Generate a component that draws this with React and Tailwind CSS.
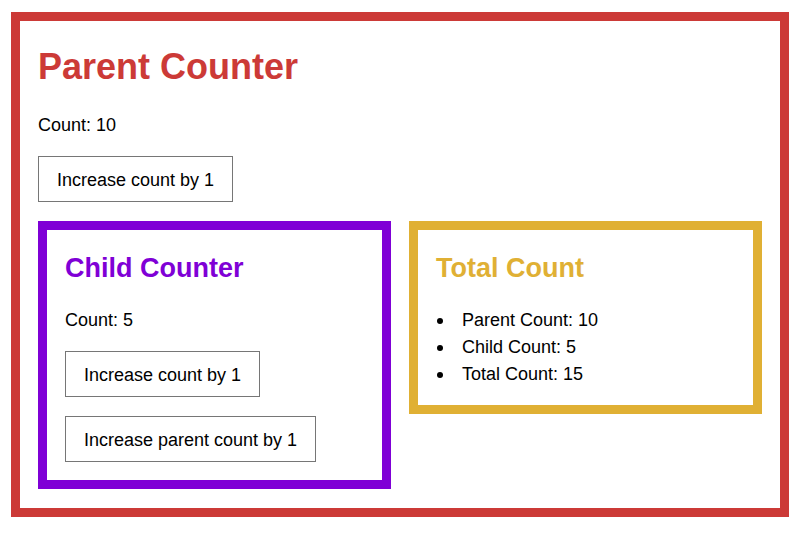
import React from "react";

function Btn({ children }) {
  return (
    <button className="block border border-[#767676] bg-white px-[18px] pt-[10px] pb-[8px] text-[18px] leading-[26px] text-black">
      {children}
    </button>
  );
}

function Bullet({ children }) {
  return (
    <li className="flex items-center h-[27px]">
      <span className="flex w-[26px] shrink-0">
        <span className="ml-[1px] block w-[6px] h-[6px] rounded-full bg-black" />
      </span>
      <span>{children}</span>
    </li>
  );
}

export default function App() {
  return (
    <div
      className="min-h-[535px] w-[801px] bg-white pt-[12px] pl-[11px] text-black"
      style={{ fontFamily: '"Liberation Sans", Arial, Helvetica, sans-serif' }}
    >
      <div className="w-[778px] border-[9px] border-[#cc3a37] px-[18px] pt-[19px] pb-[19px]">
        <h1 className="text-[36px] leading-[53px] font-bold text-[#cc3a37]">
          Parent Counter
        </h1>
        <p className="mt-[19px] text-[18px] leading-[27px]">Count: 10</p>
        <div className="mt-[17px]">
          <Btn>Increase count by 1</Btn>
        </div>
        <div className="mt-[19px] grid grid-cols-2 gap-[18px] items-start">
          <div className="border-[9px] border-[#7f00d6] px-[18px] pt-[18px] pb-[18px]">
            <h2 className="text-[27px] leading-[40px] font-bold text-[#7f00d6]">
              Child Counter
            </h2>
            <p className="mt-[19px] text-[18px] leading-[27px]">Count: 5</p>
            <div className="mt-[17px] flex flex-col items-start gap-[19px]">
              <Btn>Increase count by 1</Btn>
              <Btn>Increase parent count by 1</Btn>
            </div>
          </div>
          <div className="border-[9px] border-[#e0b034] px-[18px] pt-[18px] pb-[17px]">
            <h2 className="text-[27px] leading-[40px] font-bold text-[#e0b034]">
              Total Count
            </h2>
            <ul className="mt-[19px] text-[18px] leading-[27px]">
              <Bullet>Parent Count: 10</Bullet>
              <Bullet>Child Count: 5</Bullet>
              <Bullet>Total Count: 15</Bullet>
            </ul>
          </div>
        </div>
      </div>
    </div>
  );
}
